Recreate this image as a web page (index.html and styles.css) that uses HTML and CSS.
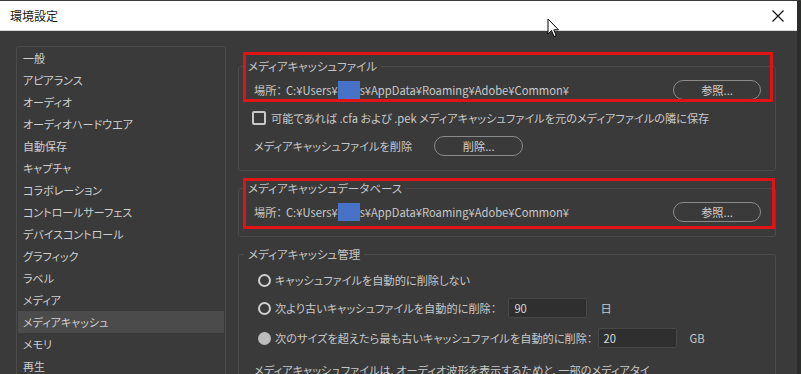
FILE: index.html
```html
<!DOCTYPE html>
<html lang="ja">
<head>
    <meta charset="UTF-8">
    <title>環境設定</title>
    <link rel="stylesheet" href="styles.css">
</head>
<body>
    <div class="Desk-strip"></div>
    <div class="Dialog">
        <div class="Dialog-title">
            <span>環境設定</span>
            <svg class="Dialog-close" width="12" height="12" viewBox="0 0 12 12">
                <path d="M0.5 0.5 L11.5 11.5 M11.5 0.5 L0.5 11.5" stroke="#111" stroke-width="1.2" fill="none"/>
            </svg>
        </div>

        <div class="Dialog-main">
            <ul class="Prefs-list">
                <li>一般</li>
                <li>アピアランス</li>
                <li>オーディオ</li>
                <li>オーディオハードウエア</li>
                <li>自動保存</li>
                <li>キャプチャ</li>
                <li>コラボレーション</li>
                <li>コントロールサーフェス</li>
                <li>デバイスコントロール</li>
                <li>グラフィック</li>
                <li>ラベル</li>
                <li>メディア</li>
                <li class="is-selected">メディアキャッシュ</li>
                <li>メモリ</li>
                <li>再生</li>
            </ul>

            <div class="Prefs-content">
                <div class="Mark Mark--one"></div>
                <div class="Mark Mark--two"></div>

                <fieldset class="Group Group--files">
                    <legend>メディアキャッシュファイル</legend>
                    <div class="Row Row--path">
                        <span class="Path"><span class="Path-label">場所：</span>C:¥Users¥<span class="Redact"></span>s¥AppData¥Roaming¥Adobe¥Common¥</span>
                        <span class="Btn Btn--browse">参照...</span>
                    </div>
                    <div class="Row Row--check">
                        <span class="Check"></span>
                        <span>可能であれば .cfa および .pek メディアキャッシュファイルを元のメディアファイルの隣に保存</span>
                    </div>
                    <div class="Row Row--delete">
                        <span>メディアキャッシュファイルを削除</span>
                        <span class="Btn Btn--delete">削除...</span>
                    </div>
                </fieldset>

                <fieldset class="Group Group--db">
                    <legend>メディアキャッシュデータベース</legend>
                    <div class="Row Row--path">
                        <span class="Path"><span class="Path-label">場所：</span>C:¥Users¥<span class="Redact"></span>s¥AppData¥Roaming¥Adobe¥Common¥</span>
                        <span class="Btn Btn--browse">参照...</span>
                    </div>
                </fieldset>

                <fieldset class="Group Group--manage">
                    <legend>メディアキャッシュ管理</legend>
                    <div class="Row Row--radio Row--first">
                        <span class="Radio"></span>
                        <span>キャッシュファイルを自動的に削除しない</span>
                    </div>
                    <div class="Row Row--radio">
                        <span class="Radio"></span>
                        <span>次より古いキャッシュファイルを自動的に削除：</span>
                        <span class="Field Field--days">90</span>
                        <span class="Unit">日</span>
                    </div>
                    <div class="Row Row--radio Row--third">
                        <span class="Radio is-on"></span>
                        <span>次のサイズを超えたら最も古いキャッシュファイルを自動的に削除：</span>
                        <span class="Field Field--size">20</span>
                        <span class="Unit">GB</span>
                    </div>
                    <p class="Note">メディアキャッシュファイルは、オーディオ波形を表示するためと、一部のメディアタイ</p>
                </fieldset>
            </div>
        </div>

        <svg class="Cursor" width="13" height="20" viewBox="0 0 13 20">
            <path d="M1 1 L1 16 L4.5 12.5 L7 18.5 L9.2 17.6 L6.8 11.8 L11.5 11.8 Z" fill="#fff" stroke="#000" stroke-width="1" stroke-linejoin="round"/>
        </svg>
    </div>
</body>
</html>
```

FILE: styles.css
```css
* {
    margin: 0;
    padding: 0;
    box-sizing: border-box;
}

html, body {
    height: 100%;
    overflow: hidden;
}

body {
    background: #2b2d2a;
    font-family: "Noto Sans CJK JP", "Noto Sans", sans-serif;
    font-feature-settings: "palt";
    color: #c8c8c8;
}

.Desk-strip {
    height: 1px;
    background: #3a3a36;
}

.Dialog {
    position: relative;
    width: 797px;
    height: 373px;
    background: #3a3a3a;
}

.Dialog-title {
    height: 30px;
    background: #ffffff;
    color: #1a1a1a;
    font-size: 12px;
    display: flex;
    align-items: center;
    justify-content: space-between;
    padding: 0 13px 0 10px;
    border-bottom: 1px solid #d8d8d8;
}

.Dialog-main {
    display: flex;
    gap: 12px;
    padding: 15px 0 0 16px;
    height: 343px;
}

.Prefs-list {
    list-style: none;
    width: 210px;
    height: 340px;
    border: 1px solid #4a4a4a;
    border-radius: 3px;
    font-size: 11px;
    overflow: hidden;
}

.Prefs-list li {
    height: 22px;
    line-height: 22px;
    margin: 0 1px;
    padding-left: 5px;
    color: #cfcfcf;
}

.Prefs-list li.is-selected {
    background: #4b4b4b;
}

.Prefs-content {
    position: relative;
    width: 538px;
    padding-top: 12px;
    font-size: 11.2px;
}

.Group {
    border: 1px solid #4a4a4a;
    border-radius: 3px;
    padding: 0 14px 0 15px;
    margin: 0;
}

.Group legend {
    margin-left: -10px;
    padding: 0 4px;
    line-height: 16px;
    font-size: 11.5px;
    color: #c4c4c4;
}

.Group--files {
    padding-bottom: 13px;
}

.Group--db {
    margin-top: 9px;
    padding-bottom: 13px;
}

.Group--manage {
    margin-top: 9px;
    height: 140px;
}

.Row {
    display: flex;
    align-items: center;
    height: 22px;
}

.Row--path {
    justify-content: space-between;
    margin-top: 5px;
}

.Path {
    display: flex;
    align-items: center;
    white-space: nowrap;
}

.Path-label {
    margin-right: 4px;
}

.Redact {
    display: inline-block;
    width: 22px;
    height: 18px;
    background: #4772c8;
}

.Btn {
    display: flex;
    align-items: center;
    justify-content: center;
    height: 20px;
    border: 1px solid #8a8a8a;
    border-radius: 10px;
    color: #d0d0d0;
}

.Btn--browse {
    width: 88px;
}

.Btn--delete {
    width: 89px;
    margin-left: 22px;
}

.Row--check {
    margin-top: 6px;
    margin-left: -2px;
    gap: 5px;
}

.Check {
    width: 14px;
    height: 14px;
    border: 2px solid #c8c8c8;
    border-radius: 2px;
}

.Row--delete {
    margin-top: 6px;
}

.Row--radio {
    height: 24px;
    padding-left: 4px;
    gap: 4px;
    margin-top: 4px;
}

.Row--first {
    margin-top: 6px;
}

.Row--third {
    margin-top: 6px;
}

.Radio {
    width: 13px;
    height: 13px;
    border: 2px solid #d0d0d0;
    border-radius: 50%;
}

.Radio.is-on {
    border-color: #bcbcbc;
    background: #bcbcbc;
}

.Field {
    display: flex;
    align-items: center;
    width: 79px;
    height: 20px;
    padding-left: 5px;
    background: #2f2f2f;
    border: 1px solid #474747;
    border-radius: 2px;
    color: #d8d8d8;
}

.Field--days {
    margin-left: 8px;
}

.Field--size {
    margin-left: 1px;
}

.Unit {
    margin-left: 9px;
}

.Note {
    margin-top: 9px;
    line-height: 22px;
    white-space: nowrap;
}

/* red annotation frames drawn over the dialog */
.Mark {
    position: absolute;
    border: 3px solid #e01414;
    left: 5px;
}

.Mark--one {
    top: 6px;
    width: 530px;
    height: 50px;
}

.Mark--two {
    top: 132px;
    width: 532px;
    height: 51px;
}

.Cursor {
    position: absolute;
    left: 547px;
    top: 17px;
}
```
